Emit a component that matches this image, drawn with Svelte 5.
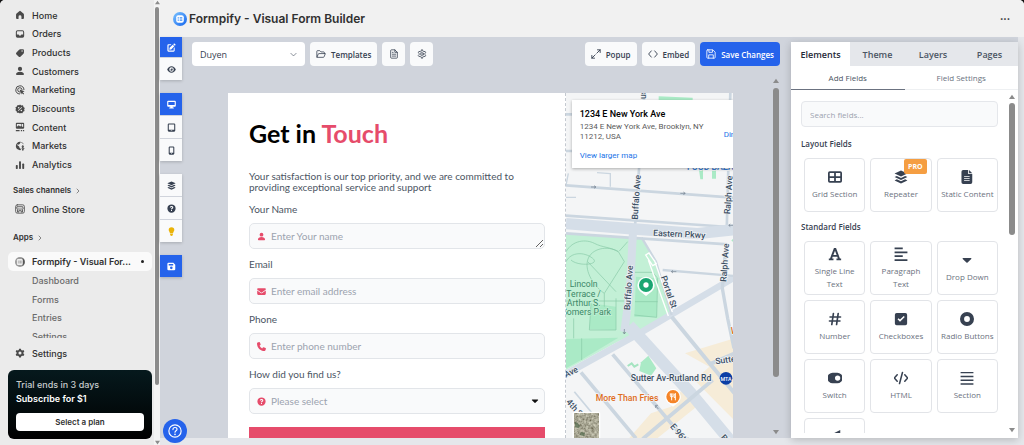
<script lang="ts">
	type Item = { label: string; icon: string; pro?: boolean }

	const navItems: Item[] = [
		{ label: 'Home', icon: 'home' },
		{ label: 'Orders', icon: 'inbox' },
		{ label: 'Products', icon: 'tag' },
		{ label: 'Customers', icon: 'person' },
		{ label: 'Marketing', icon: 'target' },
		{ label: 'Discounts', icon: 'discount' },
		{ label: 'Content', icon: 'content' },
		{ label: 'Markets', icon: 'globe' },
		{ label: 'Analytics', icon: 'chart' }
	]

	const appPages = ['Dashboard', 'Forms', 'Entries', 'Settings']

	const railGroups = [
		[
			{ label: 'Edit', icon: 'edit', active: true },
			{ label: 'Preview', icon: 'eye' }
		],
		[
			{ label: 'Desktop', icon: 'desktop', active: true },
			{ label: 'Tablet', icon: 'tablet' },
			{ label: 'Mobile', icon: 'mobile' }
		],
		[
			{ label: 'Layers', icon: 'layers' },
			{ label: 'Help', icon: 'question' },
			{ label: 'Tips', icon: 'bulb' }
		],
		[{ label: 'Save', icon: 'savefill', active: true }]
	]

	const tabs = ['Elements', 'Theme', 'Layers', 'Pages']

	const fieldGroups: { title: string; fields: Item[] }[] = [
		{
			title: 'Layout Fields',
			fields: [
				{ label: 'Grid Section', icon: 'grid' },
				{ label: 'Repeater', icon: 'layers', pro: true },
				{ label: 'Static Content', icon: 'file' }
			]
		},
		{
			title: 'Standard Fields',
			fields: [
				{ label: 'Single Line Text', icon: 'font' },
				{ label: 'Paragraph Text', icon: 'align' },
				{ label: 'Drop Down', icon: 'caret' },
				{ label: 'Number', icon: 'hash' },
				{ label: 'Checkboxes', icon: 'check' },
				{ label: 'Radio Buttons', icon: 'radio' },
				{ label: 'Switch', icon: 'switch' },
				{ label: 'HTML', icon: 'html' },
				{ label: 'Section', icon: 'bars' },
				{ label: 'Range', icon: 'range' }
			]
		}
	]

	const line = 'fill="none" stroke="currentColor" stroke-linecap="round" stroke-linejoin="round"'

	// inner markup, all on a 24x24 box
	const icons: Record<string, string> = {
		home: '<path d="M10.300 2.700a2.600 2.600 0 0 1 3.400 0l6.500 5.800c.8.7 1.300 1.700 1.300 2.800V19a2.500 2.500 0 0 1-2.500 2.500h-3.500V16a3.500 3.500 0 0 0-7 0v5.500H5A2.500 2.500 0 0 1 2.500 19v-7.700c0-1.100.5-2.100 1.300-2.800z"/>',
		inbox: '<path fill-rule="evenodd" d="M6 3h12a4 4 0 0 1 4 4v10a4 4 0 0 1-4 4H6a4 4 0 0 1-4-4V7a4 4 0 0 1 4-4zm0 2.500A1.500 1.500 0 0 0 4.500 7v6h3.300c.8 0 1.300.4 1.700 1.100.5 1 1.300 1.900 2.500 1.900s2-.9 2.500-1.900c.4-.7.9-1.100 1.700-1.100h3.300V7A1.500 1.500 0 0 0 18 5.500z"/>',
		tag: '<path fill-rule="evenodd" d="M12.500 3H19a2.500 2.500 0 0 1 2.500 2.500V11c0 1-.4 2-1.100 2.700l-6.900 6.900a3.500 3.500 0 0 1-5 0l-5-5a3.500 3.500 0 0 1 0-5l6.300-6.300A4 4 0 0 1 12.500 3zM17 9a1.700 1.700 0 1 0 0-3.400A1.700 1.700 0 0 0 17 9z"/>',
		person: '<circle cx="12" cy="7" r="5"/><path d="M2.500 20c0-4 4-6.500 9.500-6.500s9.500 2.500 9.500 6.500c0 1-.8 1.700-1.800 1.700H4.300c-1 0-1.800-.7-1.800-1.700z"/>',
		target: `<g ${line} stroke-width="2.400"><path d="M21.500 11A9.800 9.800 0 1 0 11 21.500"/><path d="M17 11a5.300 5.300 0 1 0-6 6"/></g><path d="M11 11l12 4-4.500 2.200L22 21l-2 2-3.600-3.700L14.500 23z"/>`,
		discount: '<path fill-rule="evenodd" d="M12 1l3.200 2.400 4-.3 1.100 3.800 3.200 2.400L22 13l1 3.800-3.600 1.600L17.800 22l-3.900-.6L12 23l-3.200-1.900-4 .1-.9-3.900L1 15l1.300-3.700L1 7.600 4.600 6 6.200 2.500l3.900.6zM8.800 7a1.900 1.900 0 1 0 0 3.800 1.900 1.900 0 0 0 0-3.800zm6.400 6.500a1.900 1.900 0 1 0 0 3.800 1.900 1.900 0 0 0 0-3.800zM7 15.800 8.200 17 17 8.200 15.800 7z"/>',
		content: '<path fill-rule="evenodd" d="M4 2h16a2 2 0 0 1 2 2v10a2 2 0 0 1-2 2H4a2 2 0 0 1-2-2V4a2 2 0 0 1 2-2zm.5 2.500v7L9 8l3.500 3L15 9l4.500 3.500v-8zM15.500 5.500a1.500 1.500 0 1 1 0 3 1.500 1.500 0 0 1 0-3zM2 19h9v3H2zm12 0h3v3h-3zm5 0h3v3h-3z"/>',
		globe: `<path fill-rule="evenodd" d="M12 2a10 10 0 1 0 2 19.800V19l-3-2-1-4-5-3.500 1-1.500 3 1 3-3 1-3 4 1 1 2 2.500 2 1 2A10 10 0 0 0 12 2z"/><path ${line} stroke-width="2.400" d="M21 13.500c-1-1.500-4.500-1.300-4.500.7s4.700 1.500 4.700 4-4 3-5.200.9M18.800 11v11.500"/>`,
		chart: '<rect x="2" y="12" width="4.600" height="9.500" rx="1.500"/><rect x="9.700" y="3" width="4.600" height="18.500" rx="1.500"/><rect x="17.400" y="8.500" width="4.600" height="13" rx="1.500"/>',
		store: `<g ${line} stroke-width="2"><rect x="1.500" y="2" width="21" height="20" rx="4"/><path d="M5.500 6.500h13l1 4.500c-1 2-3.500 2-5 0-1.500 2-3.500 2-5 0-1.500 2-4 2-5 0zM6 14v5.500h3V16h6v3.500h3V14"/></g>`,
		gear: '<path fill-rule="evenodd" d="M9.800 1.500h4.400l.8 3 2.200 1.200 3-.9 2.200 3.800-2.200 2.200v2.400l2.200 2.200-2.200 3.800-3-.9-2.200 1.200-.8 3H9.800l-.8-3-2.200-1.200-3 .9-2.200-3.800 2.200-2.200v-2.400L1.600 8.600l2.200-3.800 3 .9L9 4.500zM12 8.300a3.700 3.700 0 1 0 0 7.400 3.700 3.700 0 0 0 0-7.400z"/>',
		chevron: `<path ${line} stroke-width="2.500" d="M8 4l8 8-8 8"/>`,
		chevdown: `<path ${line} stroke-width="2" d="M3 8l9 9 9-9"/>`,
		edit: '<path d="M16.500 3.200l4.300 4.300 1.400-1.400a2.200 2.200 0 0 0 0-3L20.900 1.800a2.200 2.200 0 0 0-3 0zM15.300 4.400l4.300 4.300-8.400 8.400-5 .7.700-5z"/><path d="M4 3.500h8L9.500 6.300H5a.8.8 0 0 0-.8.800v12c0 .4.400.8.8.800h12c.4 0 .8-.4.800-.8v-5l2.700-2.500V20a3 3 0 0 1-3 3H4a3 3 0 0 1-3-3V6.500a3 3 0 0 1 3-3z"/>',
		eye: '<path fill-rule="evenodd" d="M12 3.500c5.500 0 9.500 4 11.500 8.500-2 4.500-6 8.500-11.500 8.500S2.500 16.500.5 12C2.500 7.500 6.500 3.500 12 3.500zm0 2.500a6 6 0 1 0 0 12 6 6 0 0 0 0-12zm0 2.700a3.300 3.300 0 1 1-3.300 3.300c1.800.5 3.500-1 3.300-3.300z"/>',
		desktop: '<path fill-rule="evenodd" d="M3 2h18a2.500 2.500 0 0 1 2.500 2.500v11A2.500 2.500 0 0 1 21 18h-6l.5 2.300H18V22.500H6v-2.200h2.500L9 18H3a2.500 2.500 0 0 1-2.500-2.500v-11A2.500 2.500 0 0 1 3 2zm.5 3v8.500h17V5z"/>',
		tablet: '<path fill-rule="evenodd" d="M5 1h14a3 3 0 0 1 3 3v16a3 3 0 0 1-3 3H5a3 3 0 0 1-3-3V4a3 3 0 0 1 3-3zm-.2 2.800v14.400h14.400V3.800zM10 19.800v1.500h4v-1.500z"/>',
		mobile: '<path fill-rule="evenodd" d="M7.500 1h9a3 3 0 0 1 3 3v16a3 3 0 0 1-3 3h-9a3 3 0 0 1-3-3V4a3 3 0 0 1 3-3zm-.2 2.800v14.400h9.400V3.800zM10.500 19.800v1.500h3v-1.500z"/>',
		layers: '<path d="M12 1l11 5-11 5.200L1 6z"/><path d="M1 12l3.800-1.800L12 13.600l7.200-3.400L23 12l-11 5.200z"/><path d="M1 17.800L4.800 16l7.200 3.400 7.200-3.400 3.800 1.800L12 23z"/>',
		question: '<path fill-rule="evenodd" d="M12 1a11 11 0 1 1 0 22 11 11 0 0 1 0-22zM7.500 9.500h2.800c0-1 .7-1.600 1.800-1.600s1.700.6 1.700 1.400c0 .7-.3 1-1.300 1.600-1.300.8-1.900 1.600-1.900 3.400h2.700c0-.8.300-1.100 1.400-1.800 1.300-.8 2-1.800 2-3.300 0-2.300-1.900-3.900-4.600-3.900S7.500 6.900 7.500 9.500zm4.500 6a1.600 1.600 0 1 0 0 3.200 1.600 1.600 0 0 0 0-3.200z"/>',
		bulb: '<path d="M12 .5a7.500 7.500 0 0 1 7.500 7.500c0 3.500-3 5-3.500 9H8c-.5-4-3.500-5.500-3.500-9A7.500 7.500 0 0 1 12 .5zM8.300 18.500h7.400V20a3.700 3.700 0 0 1-7.400 0z"/>',
		savefill: '<path fill-rule="evenodd" d="M4 2h13l5 5v12a3 3 0 0 1-3 3H4a3 3 0 0 1-3-3V5a3 3 0 0 1 3-3zm.5 3v4.500h12V5zm7 7a3.500 3.500 0 1 0 0 7 3.500 3.500 0 0 0 0-7z"/>',
		folder: `<path ${line} stroke-width="1.900" d="M2 18V5.500A1.500 1.500 0 0 1 3.500 4H9l3 3h6.500A1.500 1.500 0 0 1 20 8.500V11M2.300 19.500 5.500 12a1.500 1.500 0 0 1 1.400-1H22.500l-3.300 8a1.500 1.500 0 0 1-1.400 1H2.800"/>`,
		doc: `<path ${line} stroke-width="1.900" d="M4 3.500A1.500 1.500 0 0 1 5.500 2H14l6 6v12.500a1.500 1.500 0 0 1-1.500 1.500h-13A1.500 1.500 0 0 1 4 20.500zM14 2v6h6M8 8h2M8 12.500h8M8 17h8"/>`,
		cog: `<g ${line} stroke-width="1.900"><path d="M9.900 5.300 10.500 2h3l.6 3.300 2.200 1.300 3-1 1.700 2.800-2.200 2v2.800l2.200 2.200-1.700 2.800-3-.9-2.200 1.300-.6 3.400h-3l-.6-3.400-2.200-1.300-3 .9-1.700-2.800 2.200-2.200v-2.800l-2.200-2 1.700-2.800 3 1z"/><circle cx="12" cy="12" r="3.300"/></g>`,
		expand: `<path ${line} stroke-width="2.200" d="M14 10l8-8M15.500 2H22v6.500M10 14l-8 8M8.500 22H2v-6.500"/>`,
		code: `<path ${line} stroke-width="2.200" d="M8 4.500L1.500 12 8 19.500M16 4.500l6.500 7.500L16 19.500"/>`,
		save: `<path ${line} stroke-width="2" d="M4 2h12.500L22 7.500V20a2 2 0 0 1-2 2H4a2 2 0 0 1-2-2V4a2 2 0 0 1 2-2zM7 2v6h8.500V3M6.500 22v-8h11v8"/>`,
		grid: '<path fill-rule="evenodd" d="M3 2h18a3 3 0 0 1 3 3v14a3 3 0 0 1-3 3H3a3 3 0 0 1-3-3V5a3 3 0 0 1 3-3zm0 3v5.500h7.500V5zm10.500 0v5.500H21V5zM3 13.500V19h7.500v-5.500zm10.500 0V19H21v-5.500z"/>',
		file: '<path fill-rule="evenodd" d="M5.500 0H14v7h7v14a3 3 0 0 1-3 3H5.500a3 3 0 0 1-3-3V3a3 3 0 0 1 3-3zM7 10.500v1.500h9.500v-1.500zm0 3.500v1.500h9.500V14zm0 3.500V19h9.500v-1.500z"/><path d="M15.500 0L21 5.500h-5.500z"/>',
		font: '<path fill-rule="evenodd" d="M10.200 1.500h3.600l6.600 18h2.100v3h-8v-3h2.400l-1-3H8l-1 3h2.400v3h-8v-3h2.100zM12 6.500L9.200 13.500h5.600z"/>',
		align: '<path d="M1 1h14v2.800H1zM1 7.700h22v2.800H1zM1 14.300h14v2.800H1zM1 21h22v2.800H1z"/>',
		caret: '<path d="M5.500 8.500h13a1 1 0 0 1 .8 1.700l-6.300 6.100a1.400 1.400 0 0 1-2 0l-6.300-6.100a1 1 0 0 1 .8-1.700z"/>',
		hash: `<path ${line} stroke-width="2.800" d="M9.300 2.500L6.500 21.500M17.500 2.500L14.700 21.500M3.500 8.500h18M2.500 15.500h18"/>`,
		check: `<path fill-rule="evenodd" d="M4.500 1.500h15a3 3 0 0 1 3 3v15a3 3 0 0 1-3 3h-15a3 3 0 0 1-3-3v-15a3 3 0 0 1 3-3zM7.800 10.500l-1.800 1.800 4.300 4.300L18.500 8.500l-1.800-1.800-6.400 6.300z"/>`,
		radio: '<path fill-rule="evenodd" d="M12 0a12 12 0 1 1 0 24 12 12 0 0 1 0-24zm0 7a5 5 0 1 0 0 10 5 5 0 0 0 0-10z"/>',
		switch: '<path fill-rule="evenodd" d="M8 3h8a9 9 0 0 1 0 18H8A9 9 0 0 1 8 3zm8.500 4.500a4.500 4.500 0 1 0 0 9 4.500 4.500 0 0 0 0-9z"/>',
		html: `<path ${line} stroke-width="2.600" d="M5.500 6.500L0.500 12l5 5.500M18.500 6.500l5 5.500-5 5.500M14.500 2.500l-5 19"/>`,
		bars: '<path d="M1 1.500h22v2.500H1zM1 8h22v2.500H1zM1 14.500h22v2.500H1zM1 21h22v2.500H1z"/>',
		range: '<path d="M21 0v18h-4L3 9z"/>',
		mail: '<path d="M2.500 3.500h19A2.200 2.200 0 0 1 23 7.200l-10 7.500a1.800 1.800 0 0 1-2 0L1 7.200a2.200 2.200 0 0 1 1.500-3.700z"/><path d="M.5 9l9.500 7.200a3.400 3.400 0 0 0 4 0L23.500 9v9a3 3 0 0 1-3 3h-17a3 3 0 0 1-3-3z"/>',
		phone: '<path d="M7.800 1.200a1.900 1.900 0 0 0-2.200-1L1.800 1.500C.8 1.800 0 2.700 0 3.700 0 15 9 24 20.300 24c1 0 1.900-.8 2.200-1.800l1.200-3.800a1.900 1.900 0 0 0-1-2.200l-4.800-2a1.900 1.900 0 0 0-2.200.6l-1.900 2.300a14.500 14.500 0 0 1-7-7l2.300-1.900c.6-.5.8-1.400.5-2.200z"/>',
		up: '<path d="M12 3l12 17H0z"/>',
		down: '<path d="M12 21L0 4h24z"/>',
		help: `<g ${line} stroke-width="2"><circle cx="12" cy="12" r="10.500"/><path d="M8.500 9.500c0-2.200 1.500-3.500 3.500-3.500s3.500 1.300 3.500 3.200c0 2.500-3.500 2.500-3.500 5"/></g><circle cx="12" cy="17.800" r="1.400"/>`,
		logo: '<defs><linearGradient id="lg" x1="0" y1="0" x2="1" y2="1"><stop offset="0" stop-color="#7cc4ff"/><stop offset="1" stop-color="#1263ee"/></linearGradient></defs><circle cx="12" cy="12" r="12" fill="url(#lg)"/><rect x="5.500" y="5.500" width="13" height="13" rx="3.500" fill="#fff"/><path d="M8 9h2v2H8zm3.500 0H16v2h-4.500zM8 13h2v2H8zm3.500 0H16v2h-4.500z" fill="#3b8cf5"/>',
		logogray: '<circle cx="12" cy="12" r="12" fill="#999"/><path d="M18 2a12 12 0 0 1 0 20z" fill="#555"/><rect x="4.500" y="5" width="14" height="14" rx="3" fill="#eee"/><path d="M7 9h2v2H7zm3.500 0H16v2h-5.500zM7 13h2v2H7zm3.500 0H16v2h-5.500z" fill="#777"/>'
	}

	let activeTab = $state('Elements')
</script>

{#snippet icon(name: string)}
	<svg class="icon" viewBox="0 0 24 24" fill="currentColor" aria-hidden="true">{@html icons[name]}</svg>
{/snippet}

{#snippet scrollbar()}
	<div class="scrollbar" aria-hidden="true">
		{@render icon('up')}
		<span class="thumb"></span>
		{@render icon('down')}
	</div>
{/snippet}

<div class="app">
	<aside class="sidebar">
		<div class="side-main">
			<nav class="side-scroll">
				<ul class="nav">
					{#each navItems as item}
						<li><a href="#{item.label}">{@render icon(item.icon)}{item.label}</a></li>
					{/each}
				</ul>
				<h2>Sales channels {@render icon('chevron')}</h2>
				<ul>
					<li><a href="#store">{@render icon('store')}Online Store</a></li>
				</ul>
				<h2 class="apps">Apps {@render icon('chevron')}</h2>
				<a class="current" href="#formpify">{@render icon('logogray')}<span>Formpify - Visual For...</span><i></i></a>
				<ul class="sub">
					{#each appPages as page}
						<li><a href="#{page}">{page}</a></li>
					{/each}
				</ul>
			</nav>
			<a class="settings" href="#settings">{@render icon('gear')}Settings</a>
			<section class="trial">
				<p>Trial ends in 3 days</p>
				<strong>Subscribe for $1</strong>
				<button>Select a plan</button>
			</section>
		</div>
		{@render scrollbar()}
	</aside>

	<div class="page">
		<header>
			{@render icon('logo')}
			<h1>Formpify - Visual Form Builder</h1>
			<button aria-label="More actions">•••</button>
		</header>

		<div class="builder">
			<div class="rail">
				{#each railGroups as group}
					<div class="rail-group">
						{#each group as tool}
							<button class:active={tool.active} class:tip={tool.icon === 'bulb'} aria-label={tool.label}>
								{@render icon(tool.icon)}
							</button>
						{/each}
					</div>
				{/each}
				<button class="help" aria-label="Help center">{@render icon('help')}</button>
			</div>

			<main>
				<div class="toolbar">
					<div class="form-picker">
						<select aria-label="Form"><option>Duyen</option></select>
						{@render icon('chevdown')}
					</div>
					<button>{@render icon('folder')}Templates</button>
					<button class="square" aria-label="Document">{@render icon('doc')}</button>
					<button class="square" aria-label="Form settings">{@render icon('cog')}</button>
					<span class="spacer"></span>
					<button>{@render icon('expand')}Popup</button>
					<button>{@render icon('code')}Embed</button>
					<button class="primary">{@render icon('save')}Save Changes</button>
				</div>

				<div class="stage">
					<div class="canvas">
						<form>
							<h2>Get in <em>Touch</em></h2>
							<p>Your satisfaction is our top priority, and we are committed to providing exceptional service and support</p>
							<label for="name">Your Name</label>
							<div class="control">
								{@render icon('person')}
								<textarea id="name" rows="1" placeholder="Enter Your name"></textarea>
							</div>
							<label for="email">Email</label>
							<div class="control">
								{@render icon('mail')}
								<input id="email" type="email" placeholder="Enter email address" />
							</div>
							<label for="phone">Phone</label>
							<div class="control">
								{@render icon('phone')}
								<input id="phone" type="tel" placeholder="Enter phone number" />
							</div>
							<label for="source">How did you find us?</label>
							<div class="control">
								{@render icon('question')}
								<select id="source"><option>Please select</option></select>
								<span class="arrow">{@render icon('caret')}</span>
							</div>
							<button class="submit" type="button">Submit</button>
						</form>

						<div class="map">
							<svg viewBox="15 24 504 1035" preserveAspectRatio="xMinYMin slice" role="img" aria-label="Map">
								<defs>
									<filter id="ground" x="0" y="0" width="1" height="1">
										<feTurbulence type="fractalNoise" baseFrequency="0.120" numOctaves="3" />
										<feColorMatrix values="0.7 0 0 0 0.05  0.7 0 0 0 0.04  0.6 0 0 0 0  0 0 0 0 1" />
									</filter>
								</defs>
								<rect x="15" y="24" width="504" height="1035" fill="#f4f5f6" />
								<path fill="#f6ecd8" d="M372 805L519 760V1005L400 885L445 845z" />
								<path fill="#f6ecd8" d="M205 1059L270 985L330 965L375 895L425 950L290 1059z" />
								<path fill="#c3f0d6" d="M15 448L240 458L285 525L332 690L245 735L170 770L15 855z" />
								<g fill="#aaeac6">
									<path d="M293 34L395 38V50H293z" />
									<path d="M90 655L165 665V735L85 733z" />
									<path d="M225 575L290 580L287 697L220 695z" />
									<path d="M15 762L172 758L60 825L15 850z" />
									<path d="M240 832L262 812L286 850L270 872L235 858z" />
									<path d="M414 255h12v28h-8zM453 255h12v26h-12z" />
									<path d="M519 458v14l-8-5z" />
								</g>
								<g fill="none" stroke="#86c9a6" stroke-width="2">
									<path d="M15 500C35 465 75 462 100 475S145 485 172 500M15 530C30 500 70 500 95 520S50 545 30 525M175 498L200 470M172 500L190 530L130 625C100 605 70 560 80 525S140 480 172 500M80 530L165 620M165 640V735H85L90 655M38 700V760M62 760V825M222 562H275L290 580L287 697L220 690M222 650H290M15 648H190M130 625V665" />
									<path stroke="#a5e4c1" stroke-width="6" d="M200 843L212 835L220 845L232 838" />
								</g>
								<g fill="none" stroke="#cbd6e0">
									<path stroke-width="8" d="M15 88H60M15 198H60M15 301L519 338M15 392L519 427M15 445L500 478M508 24L497 440M250 24L222 425" />
									<path stroke-width="4" d="M15 301L22 265M108 263L148 266V305M15 337H45" />
									<path stroke-width="34" stroke="#d5dee8" d="M15 416L220 432L410 446L519 434" />
									<path stroke-width="24" stroke="#d5dee8" d="M216 440L207 610L190 740" />
									<path stroke-width="20" stroke="#d5dee8" d="M15 867L235 745L519 578" />
									<path stroke-width="36" stroke="#d5dee8" d="M204 722L245 766L390 925L510 1070" />
									<path stroke-width="10" d="M495 480L484 610L500 700L519 790" />
									<path stroke-width="7" d="M242 458L285 530L332 690M305 555L519 573" />
									<path stroke-width="12" d="M332 695L450 840L525 930M445 838L519 806" />
									<path stroke-width="11" d="M155 808L370 1062M60 862L225 1060M245 1062L330 990L455 885" />
									<path stroke-width="5" d="M40 920L115 1010" />
								</g>
								<path d="M254 510l10-6 22 32-11 6zM262 525l60 168M280 525l54 156" fill="none" stroke="#fff" stroke-width="4" />
								<path d="M90 306h14m-5-4l6 4-6 4M358 325h14m-5-4l6 4-6 4M516 421h-12m4-4l-5 4 5 4M346 560h-14m4-4l-5 4 5 4M190 732v14m-4-5l4 6 4-6M292 972l-8-10m0 7v-8h7" fill="none" stroke="#6f7d8c" stroke-width="2" />

								<g class="street">
									<text transform="translate(256 42) rotate(-90)">us</text>
									<text transform="translate(230 404) rotate(-86)">Buffalo Ave</text>
									<text transform="translate(507 388) rotate(-86)">Ralph Ave</text>
									<text transform="translate(276 452) rotate(3)">Eastern Pkwy</text>
									<text transform="translate(207 676) rotate(-86)">Buffalo Ave</text>
									<text transform="translate(496 591) rotate(-86)">Ralph Ave</text>
									<text transform="translate(299 576) rotate(71)">Portal St</text>
									<text transform="translate(464 838) rotate(-8)">Sutter Ave</text>
									<text transform="translate(14 878) rotate(-25)">Ave</text>
									<text transform="translate(14 952) rotate(48)">4th St</text>
									<text transform="translate(326 1025) rotate(49)">E 96th St</text>
									<text x="209" y="889">Sutter Av-Rutland Rd</text>
									<text transform="translate(478 1058) rotate(48)">Blvd</text>
								</g>
								<g class="park">
									<text x="68" y="607">Lincoln</text>
									<text x="68" y="635">Terrace /</text>
									<text x="68" y="663">Arthur S.</text>
									<text x="76" y="691">Somers Park</text>
								</g>
								<text class="shop" x="378" y="255">FOOD BAZAAR</text>
								<text class="food" x="104" y="947">More Than Fries</text>
								<text class="food" x="509" y="748">W</text>

								<path d="M255 575a26 26 0 0 1 18 44l-18 14-18-14a26 26 0 0 1 18-44z" fill="#fff" />
								<circle cx="255" cy="600" r="21" fill="#1ba672" />
								<circle cx="255" cy="600" r="8" fill="#fff" />
								<path d="M336 912a24 24 0 0 1 17 40l-17 13-17-13a24 24 0 0 1 17-40z" fill="#fff" />
								<circle cx="336" cy="935" r="20" fill="#f58427" />
								<path d="M328 925v7q0 4 4 4t4-4v-7M332 925v21M343 946v-21q-5 3-4 12h4" fill="none" stroke="#fff" stroke-width="3" />
								<circle cx="495" cy="880" r="19" fill="#0b3ea5" />
								<text class="mta" x="495" y="887">MTA</text>
								<rect x="34" y="980" width="84" height="90" rx="6" fill="#fff" />
								<rect x="39" y="985" width="74" height="80" filter="url(#ground)" />
								<path d="M42 1010l8 4 8 10-6 6-10-4zM60 1040l12 4-2 10-14-4z" fill="#2f5230" opacity="0.500" />
							</svg>
							<div class="place">
								<div>
									<strong>1234 E New York Ave</strong>
									<p>1234 E New York Ave, Brooklyn, NY 11212, USA</p>
									<a href="#map">View larger map</a>
								</div>
								<a href="#directions">Directions</a>
							</div>
						</div>
					</div>
					{@render scrollbar()}
				</div>
			</main>

			<aside class="panel">
				<div class="tabs">
					{#each tabs as tab}
						<button class:active={activeTab === tab} onclick={() => (activeTab = tab)}>{tab}</button>
					{/each}
				</div>
				<div class="subtabs">
					<button class="active">Add Fields</button>
					<button>Field Settings</button>
				</div>
				<div class="panel-body">
					<div class="fields">
						<input type="search" placeholder="Search fields..." aria-label="Search fields" />
						{#each fieldGroups as group}
							<h3>{group.title}</h3>
							<div class="field-grid">
								{#each group.fields as field}
									<button>
										{@render icon(field.icon)}
										<span>{field.label}</span>
										{#if field.pro}<b>PRO</b>{/if}
									</button>
								{/each}
							</div>
						{/each}
					</div>
					{@render scrollbar()}
				</div>
			</aside>
		</div>
	</div>
</div>

<style>
	:global(body) {
		background: #111;
	}

	.app {
		display: grid;
		grid-template-columns: 160px 1fr;
		height: 100vh;
		overflow: hidden;
		border-radius: 5px 5px 0 0;
		background: #e5e7eb;
		color: #374151;
		font-family: 'Open Sans', 'Noto Sans', sans-serif;
		font-size: 8px;
	}

	.app * {
		box-sizing: border-box;
	}

	button,
	input,
	textarea,
	select {
		font: inherit;
		color: inherit;
		border: 0;
		margin: 0;
		padding: 0;
		outline: 0;
	}

	ul {
		list-style: none;
		margin: 0;
		padding: 0;
	}

	a {
		color: inherit;
		text-decoration: none;
	}

	.icon {
		display: block;
		flex: none;
		width: 10px;
		height: 10px;
	}

	.scrollbar {
		display: flex;
		flex-direction: column;
		align-items: center;
		gap: 2px;
		color: #8b8b8b;
	}

	.scrollbar .icon {
		width: 6px;
		height: 6px;
	}

	.thumb {
		width: 6px;
		border-radius: 3px;
		background: #8b8b8b;
	}

	.scrollbar .icon:last-child {
		margin-top: auto;
	}

	/* sidebar */
	.sidebar {
		display: grid;
		grid-template-columns: 1fr 6px;
		min-height: 0;
		background: #ebebeb;
		color: #303030;
		font-family: Inter, sans-serif;
		font-size: 9px;
		font-weight: 500;
	}

	.sidebar > .scrollbar {
		background: #f4f4f4;
	}

	.sidebar > .scrollbar .icon {
		width: 5px;
		height: 5px;
	}

	.sidebar > .scrollbar .thumb {
		width: 4px;
		height: 85%;
	}

	.side-main {
		display: flex;
		flex-direction: column;
		min-height: 0;
		padding: 6px 2px 6px 8px;
	}

	.side-scroll {
		flex: 1;
		overflow: hidden;
	}

	.side-scroll a,
	.settings {
		display: flex;
		align-items: center;
		gap: 7px;
		height: 18px;
		padding-left: 7px;
	}

	.side-scroll .icon,
	.settings .icon {
		color: #4a4a4a;
	}

	.nav,
	.sub {
		display: grid;
		grid-auto-rows: 1fr;
		height: 168px;
		align-items: center;
	}

	.sub {
		height: 75px;
	}

	.sidebar h2 {
		display: flex;
		align-items: center;
		gap: 4px;
		margin: 8px 0 1px;
		padding-left: 5px;
		font-size: 8px;
		font-weight: 600;
		line-height: 17px;
	}

	.sidebar h2 .icon {
		width: 6px;
		height: 6px;
	}

	.sidebar h2.apps {
		margin: 11px 0 6px;
	}

	.side-scroll a.current {
		height: 19px;
		border-radius: 5px;
		background: #fafafa;
		font-weight: 600;
	}

	.current span {
		white-space: nowrap;
	}

	.current i {
		width: 3px;
		height: 3px;
		margin: 0 8px 0 auto;
		border-radius: 50%;
		background: #222;
	}

	.sub a {
		padding-left: 24px;
		color: #6a6a6a;
	}

	.settings {
		margin: 6px 0 8px;
	}

	.trial {
		display: flex;
		flex-direction: column;
		padding: 8px;
		border-radius: 6px;
		background: linear-gradient(#06191d, #000);
		color: #fff;
		line-height: 14px;
	}

	.trial p {
		margin: 0;
		color: #c9cdce;
	}

	.trial strong {
		font-weight: 600;
	}

	.trial button {
		height: 18px;
		margin-top: 7px;
		border-radius: 4px;
		background: #fff;
		color: #303030;
		font-size: 8px;
		font-weight: 600;
	}

	/* page header */
	.page {
		display: flex;
		flex-direction: column;
		min-width: 0;
		min-height: 0;
		padding-bottom: 7px;
	}

	header {
		display: flex;
		align-items: center;
		gap: 2px;
		height: 37px;
		flex: none;
		padding: 0 14px 0 13px;
		background: #f1f1f1;
		color: #303030;
		font-family: Inter, sans-serif;
	}

	header .icon {
		width: 14px;
		height: 14px;
	}

	header h1 {
		flex: 1;
		margin: 0;
		font-size: 12px;
		font-weight: 600;
	}

	header button {
		background: none;
		font-size: 6px;
	}

	.builder {
		display: grid;
		grid-template-columns: 22px 1fr 227px;
		flex: 1;
		min-height: 0;
		margin-right: 6px;
		background: #d0d4dc;
	}

	/* tool rail */
	.rail {
		display: flex;
		flex-direction: column;
		gap: 13px;
		min-height: 0;
	}

	.rail-group {
		display: grid;
		gap: 1px;
		box-shadow: 0 1px 3px rgba(0, 0, 0, 0.2);
	}

	.rail-group button {
		display: grid;
		place-items: center;
		height: 22px;
		background: #f9fafb;
		color: #374151;
	}

	.rail-group:first-child button.active {
		height: 20px;
	}

	.rail-group .icon {
		width: 9px;
		height: 9px;
	}

	.rail-group button.active {
		background: #2563eb;
		color: #fff;
	}

	.rail-group button.tip {
		color: #eab308;
	}

	.help {
		position: fixed;
		left: 163px;
		bottom: 2px;
		display: grid;
		place-items: center;
		width: 24px;
		height: 24px;
		border-radius: 50%;
		background: #2563eb;
		color: #fff;
	}

	.help .icon {
		width: 14px;
		height: 14px;
	}

	/* editor */
	main {
		display: flex;
		flex-direction: column;
		min-width: 0;
		min-height: 0;
		padding: 5px 11px 0 10px;
	}

	.toolbar {
		display: flex;
		gap: 5px;
	}

	.toolbar button,
	.form-picker {
		display: flex;
		align-items: center;
		justify-content: center;
		gap: 5px;
		height: 24px;
		padding: 0 6px;
		border-radius: 4px;
		background: #f9fafb;
		font-weight: 600;
	}

	.toolbar .square {
		width: 23px;
		padding: 0;
	}

	.toolbar .primary {
		background: #2563eb;
		color: #fff;
	}

	.form-picker {
		width: 113px;
		padding: 0 8px;
		background: #fff;
		font-size: 9px;
		font-weight: 400;
	}

	.form-picker select {
		flex: 1;
		appearance: none;
		background: none;
	}

	.form-picker .icon {
		width: 7px;
		height: 7px;
	}

	.spacer {
		flex: 1;
	}

	.stage {
		display: grid;
		grid-template-columns: 1fr 8px;
		gap: 39px;
		flex: 1;
		min-height: 0;
		padding-left: 36px;
	}

	.stage > .scrollbar {
		padding: 12px 0 3px;
		gap: 4px;
	}

	.stage .thumb {
		height: 81%;
	}

	.canvas {
		display: grid;
		grid-template: minmax(0, 1fr) / 2fr 1fr;
		min-height: 0;
		margin-top: 27px;
		overflow: hidden;
		background: #fff;
	}

	form {
		min-width: 0;
		padding: 26px 20px 0 21px;
		font-family: Lato, sans-serif;
		font-size: 10px;
		color: #4b5563;
	}

	form h2 {
		margin: 0 0 24px;
		font-size: 25px;
		line-height: 28px;
		color: #000;
	}

	form em {
		font-style: normal;
		color: #e64c6b;
	}

	form p {
		margin: 0 0 9px;
		line-height: 11px;
	}

	form label {
		display: block;
		line-height: 14px;
		margin-bottom: 7px;
	}

	.control {
		display: flex;
		align-items: center;
		height: 26px;
		margin-bottom: 8px;
		padding-left: 7px;
		border: 1px solid #e2e5e9;
		border-radius: 5px;
		background: #f9fafb;
		color: #9ca3af;
	}

	.control > .icon {
		width: 9px;
		height: 9px;
		color: #e64c6b;
	}

	.control input,
	.control textarea,
	.control select {
		flex: 1;
		min-width: 0;
		height: 24px;
		padding: 5px;
		line-height: 14px;
		background: none;
		appearance: none;
	}

	.control ::placeholder {
		color: #9ca3af;
	}

	.control textarea {
		overflow: hidden;
	}

	.arrow {
		color: #111;
		padding-right: 4px;
	}

	.submit {
		width: 100%;
		height: 28px;
		margin-top: 5px;
		background: #e64c6b;
		color: #fff;
	}

	/* embedded map */
	.map {
		position: relative;
		min-width: 0;
		min-height: 0;
		overflow: hidden;
		border-left: 1px dashed #c4c9d0;
		font-family: Roboto, sans-serif;
	}

	.map > svg {
		display: block;
		width: 100%;
		height: 100%;
	}

	.map text {
		font-size: 26px;
		font-weight: 500;
		fill: #3c4f63;
		stroke: #f4f6f8;
		stroke-width: 4px;
		paint-order: stroke;
	}

	.map .park text {
		font-weight: 400;
		text-anchor: middle;
		fill: #3b8767;
		stroke: #c3f0d6;
	}

	.map .food {
		fill: #df6d1c;
	}

	.map .shop {
		fill: #3478d4;
	}

	.map .mta {
		font-size: 16px;
		text-anchor: middle;
		fill: #fff;
		stroke: none;
	}

	.place {
		position: absolute;
		top: 7px;
		left: 6px;
		display: flex;
		align-items: center;
		gap: 10px;
		width: 200px;
		height: 68px;
		padding: 0 8px;
		background: #fff;
		box-shadow: 0 1px 3px rgba(0, 0, 0, 0.3);
		font-size: 8px;
	}

	.place > div {
		width: 134px;
		flex: none;
	}

	.place strong {
		font-size: 9px;
		font-weight: 500;
		color: #000;
	}

	.place p {
		margin: 3px 0 9px;
		line-height: 10px;
		color: #5b5b5b;
	}

	.place a {
		color: #1a73e8;
	}

	/* right panel */
	.panel {
		display: flex;
		flex-direction: column;
		min-height: 0;
		margin-top: 5px;
		background: #fff;
		box-shadow: 0 2px 8px rgba(0, 0, 0, 0.2);
	}

	.tabs {
		display: grid;
		grid-template-columns: 59px 55px 56px 57px;
		background: #e5e7eb;
	}

	.tabs button {
		height: 24px;
		background: none;
		font-size: 9px;
		font-weight: 600;
		color: #4b5563;
	}

	.tabs button.active {
		background: #fff;
		color: #1f2937;
	}

	.subtabs {
		display: grid;
		grid-template-columns: 1fr 1fr;
	}

	.subtabs button {
		height: 24px;
		border-bottom: 1px solid #eef0f2;
		background: none;
		color: #6b7280;
	}

	.subtabs button.active {
		border-bottom-color: #6b7280;
		color: #4b5563;
	}

	.panel-body {
		display: grid;
		grid-template-columns: 1fr 8px;
		gap: 10px;
		flex: 1;
		min-height: 0;
		padding: 4px 2px 5px 10px;
	}

	.panel-body .thumb {
		height: 39%;
	}

	.panel-body .scrollbar {
		gap: 3px;
	}

	.fields {
		overflow: hidden;
		padding-top: 7px;
	}

	.fields input {
		display: block;
		width: 100%;
		height: 26px;
		margin-bottom: 10px;
		padding: 0 8px;
		border: 1px solid #e5e7eb;
		border-radius: 4px;
		background: #f9fafb;
	}

	.fields input::placeholder {
		color: #9ca3af;
	}

	.fields h3 {
		margin: 8px 0 7px;
		font-size: 8px;
		line-height: 14px;
		font-weight: 600;
	}

	.field-grid {
		display: grid;
		grid-template-columns: repeat(3, 1fr);
		gap: 5px;
		padding-left: 3px;
	}

	.field-grid button {
		position: relative;
		display: flex;
		flex-direction: column;
		align-items: center;
		justify-content: center;
		gap: 3px;
		height: 54px;
		padding: 0 2px;
		border: 1px solid #e2e4e8;
		border-radius: 4px;
		background: #fff;
		line-height: 13px;
		color: #6b7280;
	}

	.field-grid .icon {
		width: 14px;
		height: 14px;
		color: #374151;
	}

	.field-grid b {
		position: absolute;
		top: 0;
		right: 4px;
		padding: 1px 4px;
		border-radius: 2px;
		background: #f59e42;
		color: #fff;
		font-size: 7px;
	}
</style>
